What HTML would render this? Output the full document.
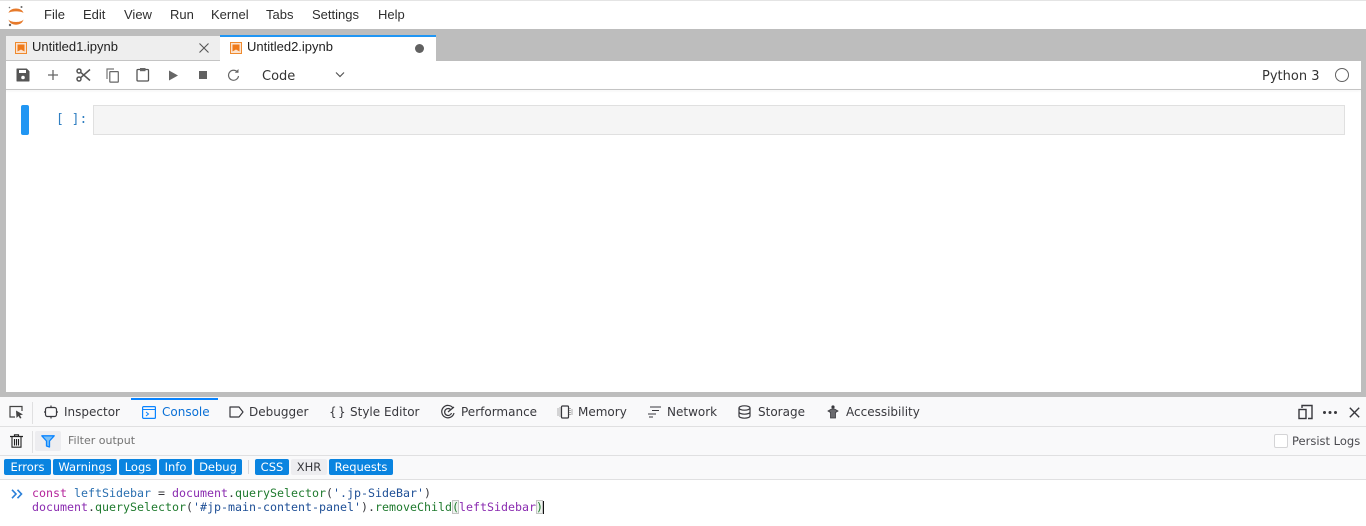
<!DOCTYPE html>
<html><head><meta charset="utf-8"><style>
html,body{margin:0;padding:0;width:1366px;height:526px;overflow:hidden;background:#fff}
body{position:relative;font-family:"Liberation Sans",sans-serif;color:#333}
.a{position:absolute;white-space:nowrap}
.m{font-size:13px;line-height:16px;top:7px;color:#2e2e2e;font-family:"Liberation Sans",sans-serif}
.t{font-size:13px;line-height:16px;top:39px;color:#222}
.d{font-family:"DejaVu Sans",sans-serif}
.dt{font-family:"DejaVu Sans",sans-serif;font-size:12px;line-height:16px;top:404px;color:#38383d}
.b{position:absolute;top:459px;height:16px;background:#0a84e0;color:#fff;border-radius:2px;font-family:"DejaVu Sans",sans-serif;font-size:11.5px;line-height:17px;text-align:center}
.c{font-family:"DejaVu Sans Mono",monospace;font-size:11.63px;line-height:14px;white-space:pre;position:absolute;left:32px}
svg{position:absolute;overflow:visible}
</style></head><body>
<div class="a" style="left:0;top:0;width:1366px;height:1px;background:#e4e4e4"></div>
<svg style="left:0;top:0" width="32" height="29" viewBox="0 0 32 29"><path d="M8.500 13C10 7 22 7 23.500 13C21 10.800 11 10.800 8.500 13Z" fill="#e67a2b"/><path d="M8.500 19.500C10 26.500 22 26.500 23.500 19.500C21 22.800 11 22.800 8.500 19.500Z" fill="#e67a2b"/><circle cx="21.500" cy="7" r="1" fill="#666"/><circle cx="9.500" cy="7.500" r=".8" fill="#777"/><circle cx="10" cy="25" r="1.200" fill="#666"/></svg>
<div class="a m" style="left:44px">File</div>
<div class="a m" style="left:83px">Edit</div>
<div class="a m" style="left:124px">View</div>
<div class="a m" style="left:170px">Run</div>
<div class="a m" style="left:211px">Kernel</div>
<div class="a m" style="left:266px">Tabs</div>
<div class="a m" style="left:312px">Settings</div>
<div class="a m" style="left:378px">Help</div>

<div class="a" style="left:0;top:29px;width:1366px;height:368px;background:#bdbdbd"></div>
<div class="a" style="left:6px;top:36px;width:214px;height:24px;background:#eeeeee"></div>
<div class="a" style="left:6px;top:60px;width:214px;height:1px;background:#c4c4c4"></div>
<div class="a" style="left:220px;top:35px;width:216px;height:26px;background:#fff;border-top:2px solid #2196f3;box-sizing:border-box"></div>
<div class="a" style="left:6px;top:61px;width:1355px;height:331px;background:#fff"></div>
<div class="a" style="left:6px;top:89px;width:1355px;height:1px;background:#c4c4c4;box-shadow:0 1px 2px rgba(0,0,0,.08)"></div>

<svg style="left:15px;top:42px" width="12" height="12" viewBox="0 0 12 12"><rect x=".5" y=".5" width="11" height="11" fill="#fbe3cf" stroke="#ef8a2e"/><path d="M2.500 2.500H9.500V9.500L6 7.500L2.500 9.500Z" fill="#ef7a1a"/></svg>
<div class="a t" style="left:32px">Untitled1.ipynb</div>
<svg style="left:199px;top:43px" width="10" height="10" viewBox="0 0 10 10"><path d="M.5.5L9.500 9.500M9.500.5L.5 9.500" stroke="#555" stroke-width="1.100" fill="none"/></svg>
<svg style="left:230px;top:42px" width="12" height="12" viewBox="0 0 12 12"><rect x=".5" y=".5" width="11" height="11" fill="#fbe3cf" stroke="#ef8a2e"/><path d="M2.500 2.500H9.500V9.500L6 7.500L2.500 9.500Z" fill="#ef7a1a"/></svg>
<div class="a t" style="left:247px">Untitled2.ipynb</div>
<div class="a" style="left:415px;top:44px;width:9px;height:9px;border-radius:50%;background:#616161"></div>

<svg style="left:16px;top:68px" width="14" height="14" viewBox="0 0 14 14"><path d="M1 1H10.500L13 3.500V13H1Z" fill="#555" stroke="#555" stroke-linejoin="round"/><rect x="3" y="2" width="7" height="3" fill="#fff"/><circle cx="7" cy="9.500" r="1.800" fill="#fff"/></svg>
<svg style="left:47px;top:69px" width="12" height="12" viewBox="0 0 12 12"><path d="M6 1V11M1 6H11" stroke="#666" stroke-width="1.300"/></svg>
<svg style="left:76px;top:68px" width="15" height="14" viewBox="0 0 15 14"><circle cx="3" cy="3" r="2" fill="none" stroke="#555" stroke-width="1.500"/><circle cx="3" cy="11" r="2" fill="none" stroke="#555" stroke-width="1.500"/><path d="M4.500 4.200L14 12.500M4.500 9.800L14 1.500" stroke="#555" stroke-width="1.500"/></svg>
<svg style="left:106px;top:68px" width="14" height="15" viewBox="0 0 14 15"><path d="M1 11V1H8" fill="none" stroke="#777" stroke-width="1.200"/><rect x="3.800" y="3.600" width="8.500" height="10.500" fill="#fff" stroke="#666" stroke-width="1.200" rx=".5"/></svg>
<svg style="left:136px;top:67px" width="14" height="15" viewBox="0 0 14 15"><rect x="1" y="2.500" width="11.500" height="11.500" fill="none" stroke="#555" stroke-width="1.300" rx="1"/><rect x="4" y="1" width="5.500" height="3.200" fill="#666"/></svg>
<svg style="left:169px;top:70px" width="10" height="11" viewBox="0 0 10 11"><path d="M0 .5L9 5.500L0 10.500Z" fill="#666"/></svg>
<div class="a" style="left:199px;top:71px;width:8px;height:8px;background:#616161"></div>
<svg style="left:227px;top:69px" width="13" height="13" viewBox="0 0 13 13"><path d="M10.500 3.200A5 5 0 1 0 11.500 7" fill="none" stroke="#666" stroke-width="1.200"/><path d="M7.800 3.700H11.500V0Z" fill="#666"/></svg>
<div class="a d" style="left:262px;top:69px;font-size:13px;line-height:16px;color:#333">Code</div>
<svg style="left:335px;top:72px" width="10" height="6" viewBox="0 0 10 6"><path d="M1 .5L5 4.500L9 .5" fill="none" stroke="#555" stroke-width="1.200"/></svg>
<div class="a d" style="left:1262px;top:69px;font-size:13px;line-height:16px;color:#333">Python 3</div>
<div class="a" style="left:1335px;top:68px;width:14px;height:14px;border:1.300px solid #616161;border-radius:50%;box-sizing:border-box"></div>

<div class="a" style="left:21px;top:105px;width:8px;height:30px;background:#2196f3;border-radius:2px"></div>
<div class="a" style="left:56px;top:112px;font-family:'DejaVu Sans Mono',monospace;font-size:13px;line-height:15px;color:#307fc1;white-space:pre">[ ]:</div>
<div class="a" style="left:93px;top:105px;width:1252px;height:30px;box-sizing:border-box;background:#f5f5f5;border:1px solid #e0e0e0"></div>

<div class="a" style="left:0;top:397px;width:1366px;height:129px;background:#fff"></div>
<div class="a" style="left:0;top:397px;width:1366px;height:29px;background:#f9f9fa;border-bottom:1px solid #e0e0e1"></div>
<div class="a" style="left:0;top:427px;width:1366px;height:28px;background:#f9f9fa;border-bottom:1px solid #e0e0e1"></div>
<div class="a" style="left:0;top:456px;width:1366px;height:23px;background:#f9f9fa;border-bottom:1px solid #e0e0e1"></div>

<svg style="left:9px;top:405px" width="15" height="14" viewBox="0 0 15 14"><path d="M6 12H1V1.500H13V6" fill="none" stroke="#444" stroke-width="1.200"/><path d="M7 5.500L14 9.500L11 10.300L12.500 13L11 13.500L9.500 11L7.500 13Z" fill="#444"/></svg>
<div class="a" style="left:32px;top:402px;width:1px;height:22px;background:#e0e0e1"></div>
<svg style="left:44px;top:405px" width="14" height="14" viewBox="0 0 14 14"><rect x="1.500" y="2.500" width="11" height="9" rx="2" fill="none" stroke="#38383d" stroke-width="1.200"/><path d="M7 .5V2.500M7 11.500V13.500M0 7H1.500M12.500 7H14" stroke="#38383d" stroke-width="1.200"/></svg>
<div class="a dt" style="left:64px">Inspector</div>
<div class="a" style="left:131px;top:398px;width:87px;height:2px;background:#0a84ff"></div>
<svg style="left:142px;top:406px" width="14" height="13" viewBox="0 0 14 13"><rect x=".6" y=".6" width="12.800" height="11.800" fill="none" stroke="#0a84ff" stroke-width="1.200" rx="1"/><path d="M1 3.500H13" stroke="#0a84ff"/><path d="M4 6L6.500 8L4 10" fill="none" stroke="#0a84ff"/></svg>
<div class="a dt" style="left:162px;color:#0a70d6">Console</div>
<svg style="left:229px;top:406px" width="15" height="12" viewBox="0 0 15 12"><path d="M1 1H10L14 6L10 11H1Z" fill="none" stroke="#38383d" stroke-width="1.200" stroke-linejoin="round"/></svg>
<div class="a dt" style="left:249px">Debugger</div>
<div class="a dt" style="left:329px">{</div>
<div class="a dt" style="left:338px">}</div>
<div class="a dt" style="left:350px">Style Editor</div>
<svg style="left:441px;top:405px" width="14" height="14" viewBox="0 0 14 14"><path d="M12 3A6.200 6.200 0 1 0 13 8" fill="none" stroke="#38383d" stroke-width="1.200"/><path d="M10 5A3.500 3.500 0 1 0 10.500 8" fill="none" stroke="#38383d" stroke-width="1.200"/><path d="M7 7L13 2" stroke="#38383d" stroke-width="1.200"/></svg>
<div class="a dt" style="left:461px">Performance</div>
<svg style="left:557px;top:405px" width="16" height="14" viewBox="0 0 16 14"><rect x="4.500" y="1" width="7" height="12" rx="1" fill="none" stroke="#38383d" stroke-width="1.200"/><path d="M1 3.500V10.500M3 2.500V11.500M13 3V11M15 4.500V9.500" stroke="#666" stroke-dasharray="1 1"/></svg>
<div class="a dt" style="left:578px">Memory</div>
<svg style="left:647px;top:406px" width="14" height="12" viewBox="0 0 14 12"><path d="M3 1H14M5 4.500H12M1 8H9M2 11H6" stroke="#38383d" stroke-width="1"/></svg>
<div class="a dt" style="left:667px">Network</div>
<svg style="left:738px;top:405px" width="13" height="14" viewBox="0 0 13 14"><ellipse cx="6.500" cy="3" rx="5.500" ry="2.200" fill="none" stroke="#38383d" stroke-width="1.200"/><path d="M1 3V11C1 12.300 3.500 13.200 6.500 13.200S12 12.300 12 11V3M1 7C1 8.300 3.500 9.200 6.500 9.200S12 8.300 12 7" fill="none" stroke="#38383d" stroke-width="1.200"/></svg>
<div class="a dt" style="left:758px">Storage</div>
<svg style="left:827px;top:405px" width="12" height="14" viewBox="0 0 12 14"><circle cx="6" cy="2" r="1.600" fill="#38383d"/><path d="M1 6L4.500 4H7.500L11 6L8.500 7.500V13H3.500V7.500Z" fill="#6a6a6e" stroke="#38383d" stroke-width=".8"/></svg>
<div class="a dt" style="left:846px">Accessibility</div>

<svg style="left:1298px;top:404px" width="15" height="16" viewBox="0 0 15 16"><path d="M4 4V1.500H14V14.500H10" fill="none" stroke="#38383d" stroke-width="1.400"/><rect x="1" y="5.500" width="7" height="9" fill="none" stroke="#38383d" stroke-width="1.400"/></svg>
<div class="a" style="left:1323px;top:411px;width:3px;height:3px;border-radius:50%;background:#38383d;box-shadow:5.500px 0 #38383d,11px 0 #38383d"></div>
<svg style="left:1349px;top:407px" width="11" height="11" viewBox="0 0 11 11"><path d="M.8.800L10.200 10.200M10.200.8L.8 10.200" stroke="#38383d" stroke-width="1.400"/></svg>

<svg style="left:10px;top:434px" width="13" height="14" viewBox="0 0 13 14"><path d="M0 2.500H13M4.500 2.500V.8H8.500V2.500" fill="none" stroke="#222" stroke-width="1.200"/><path d="M2 3V13.200H11V3M4.500 5V11.500M6.500 5V11.500M8.500 5V11.500" fill="none" stroke="#222" stroke-width="1.100"/></svg>
<div class="a" style="left:32px;top:431px;width:1px;height:22px;background:#e0e0e1"></div>
<div class="a" style="left:35px;top:431px;width:26px;height:20px;background:#ededf0;border-radius:2px"></div>
<svg style="left:41px;top:435px" width="14" height="13" viewBox="0 0 14 13"><path d="M.8.800H13.200L8.500 6V12L5.500 11V6Z" fill="#7cc0f5" stroke="#0a84ff" stroke-width="1.300" stroke-linejoin="round"/></svg>
<div class="a d" style="left:68px;top:433px;font-size:11px;line-height:16px;color:#737373">Filter output</div>
<div class="a" style="left:1274px;top:434px;width:14px;height:14px;box-sizing:border-box;background:#fff;border:1px solid #d4d4d6;border-radius:2px"></div>
<div class="a d" style="left:1292px;top:433px;font-size:11.5px;line-height:16px;color:#4a4a4f">Persist Logs</div>

<div class="b" style="left:4px;width:47px">Errors</div>
<div class="b" style="left:53px;width:64px">Warnings</div>
<div class="b" style="left:119px;width:38px">Logs</div>
<div class="b" style="left:159px;width:33px">Info</div>
<div class="b" style="left:194px;width:48px">Debug</div>
<div class="a" style="left:248px;top:460px;width:1px;height:14px;background:#d7d7db"></div>
<div class="b" style="left:255px;width:34px">CSS</div>
<div class="b" style="left:291px;width:36px;background:#ededf0;color:#38383d">XHR</div>
<div class="b" style="left:329px;width:64px">Requests</div>

<svg style="left:11px;top:489px" width="12" height="10" viewBox="0 0 12 10"><path d="M1 .8L5 5L1 9.200M6.500 .8L10.500 5L6.500 9.200" fill="none" stroke="#2a7fd8" stroke-width="1.600"/></svg>
<div class="c" style="top:486px;color:#38383d"><span style="color:#b5259b">const</span> <span style="color:#2a6fb0">leftSidebar</span> = <span style="color:#8a2bb0">document</span>.<span style="color:#1f7a2e">querySelector</span>(<span style="color:#1e4f96">'.jp-SideBar'</span>)</div>
<div class="c" style="top:500px;color:#38383d"><span style="color:#8a2bb0">document</span>.<span style="color:#1f7a2e">querySelector</span>(<span style="color:#1e4f96">'#jp-main-content-panel'</span>).<span style="color:#1f7a2e">removeChild</span><span style="background:#eef3ee;outline:1px solid #c4c4c4;outline-offset:-1px;color:#1f7a2e">(</span><span style="color:#8a2bb0">leftSidebar</span><span style="background:#eef3ee;outline:1px solid #c4c4c4;outline-offset:-1px;color:#1f7a2e">)</span></div>
<div class="a" style="left:543px;top:501px;width:1px;height:13px;background:#111"></div>
</body></html>
